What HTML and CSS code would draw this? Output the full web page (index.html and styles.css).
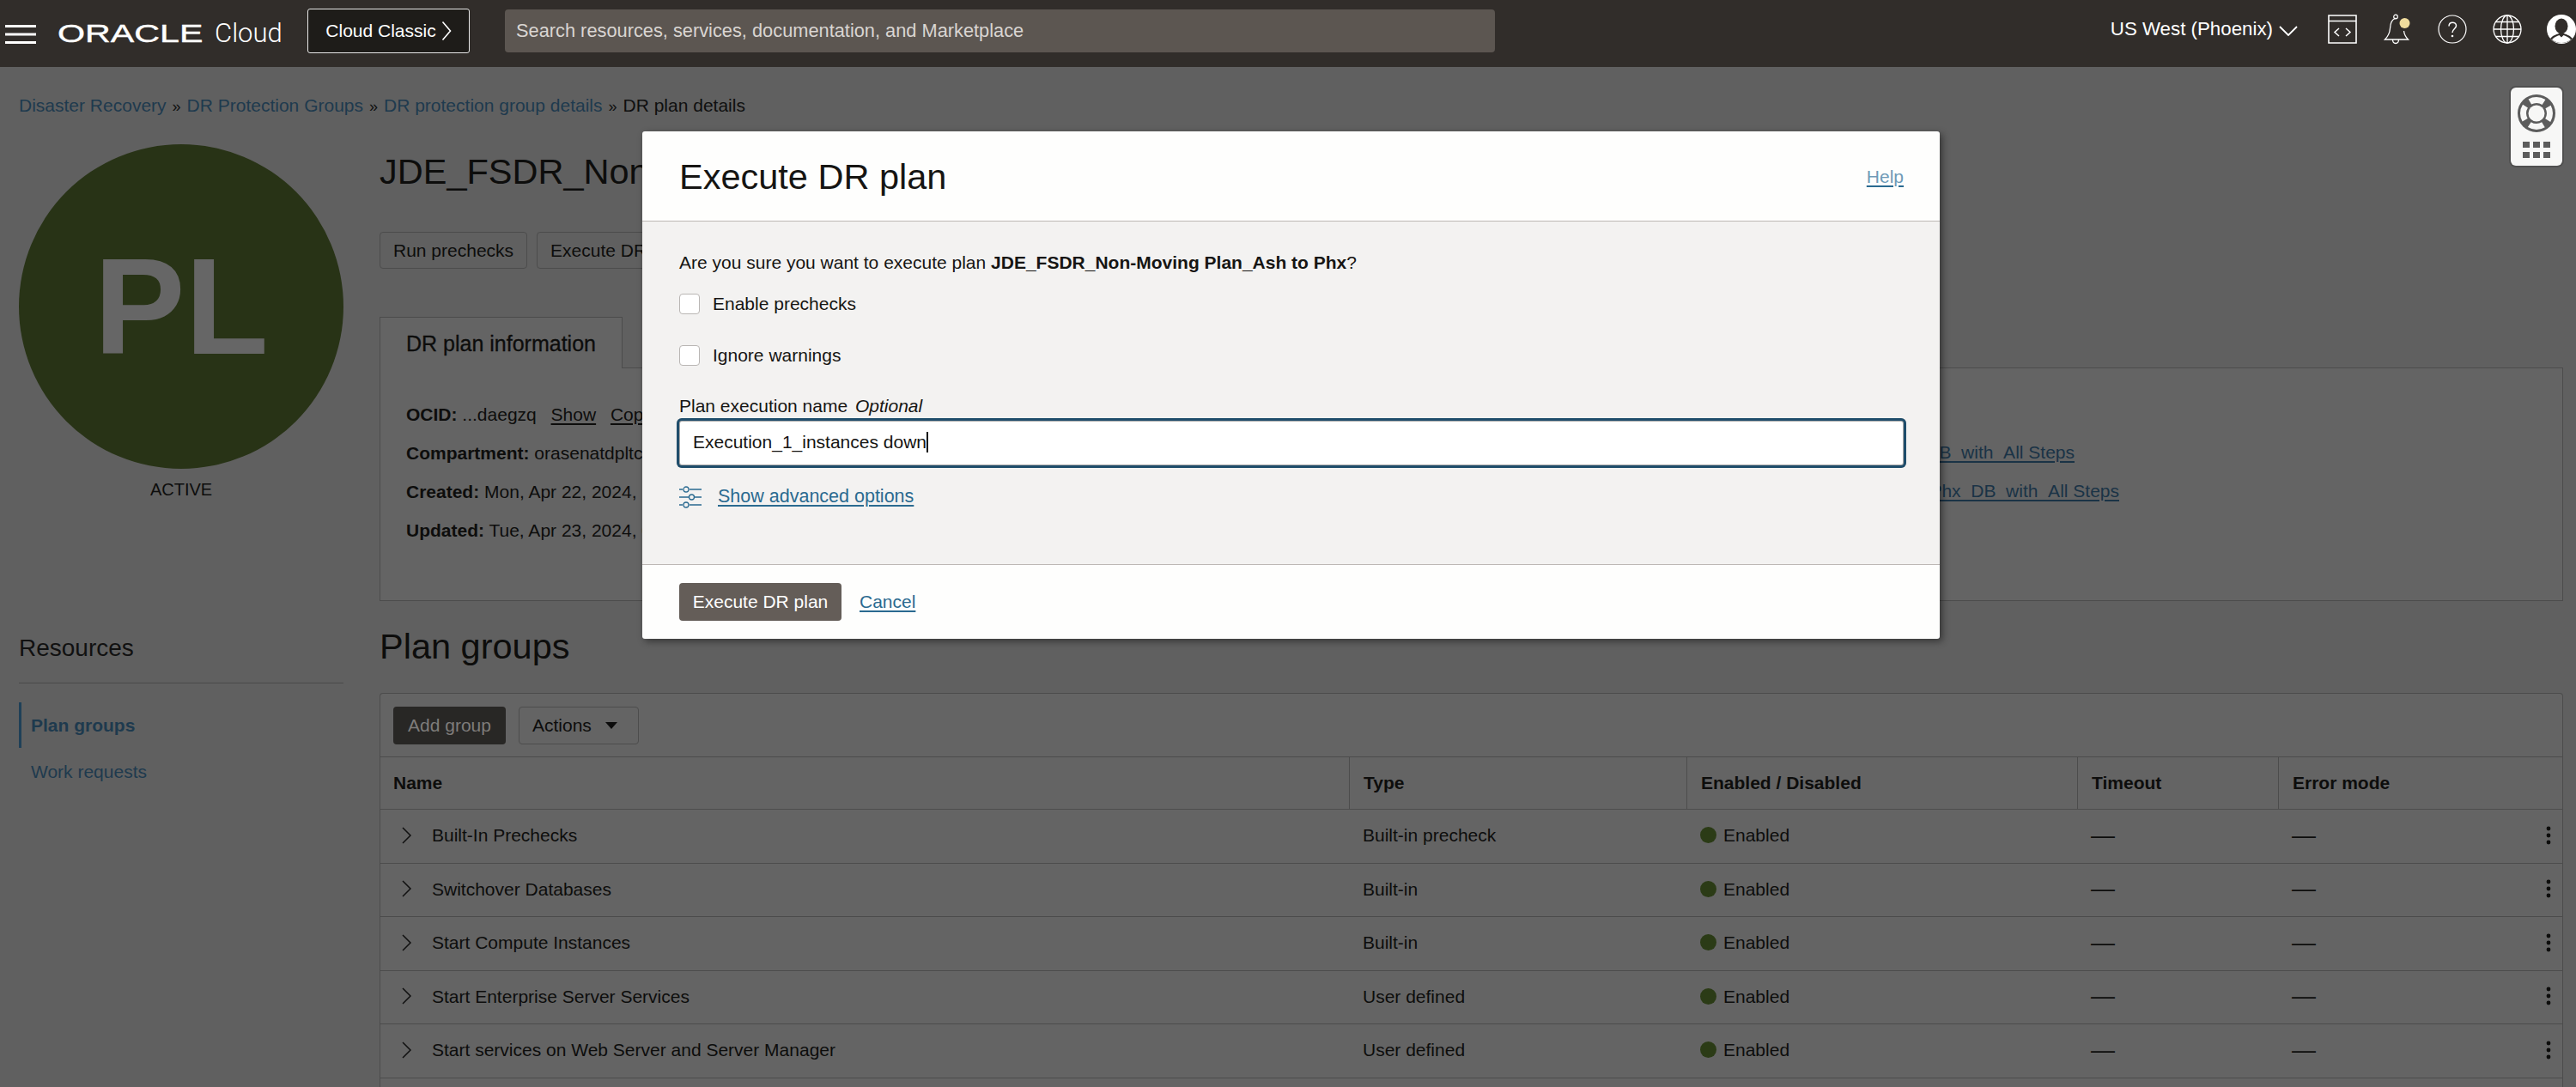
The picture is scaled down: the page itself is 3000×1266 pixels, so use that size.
FILE: index.html
```html
<!DOCTYPE html>
<html lang="en">
<head>
<meta charset="utf-8">
<title>Execute DR plan</title>
<link rel="stylesheet" href="styles.css">
</head>
<body>
<header class="topbar">
  <svg class="burger" viewBox="0 0 36 22" width="36" height="22"><path d="M0 1.5h36M0 11h36M0 20.5h36" stroke="#fff" stroke-width="3"/></svg>
  <div class="brand"><span class="oracle"><span class="oracle-inner">ORACLE</span></span><span class="cloud">Cloud</span></div>
  <button class="classic">Cloud Classic<svg viewBox="0 0 12 24" width="12" height="24"><path d="M1.5 1.5 10.5 12 1.5 22.5" fill="none" stroke="#fff" stroke-width="1.6"/></svg></button>
  <div class="search">Search resources, services, documentation, and Marketplace</div>
  <div class="top-right">
    <div class="region">US West (Phoenix)<svg viewBox="0 0 22 12" width="22" height="12"><path d="M1 1 11 11 21 1" fill="none" stroke="#fff" stroke-width="1.8"/></svg></div>
    <svg class="ic code" viewBox="0 0 34 34" width="34" height="34"><path d="M1 1h32v32H1zM1 7.5h32" fill="none" stroke="#fff" stroke-width="1.6"/><path d="M13 16l-5 4.5 5 4.5M21 16l5 4.5-5 4.5" fill="none" stroke="#fff" stroke-width="1.5"/></svg>
    <svg class="ic bell" viewBox="0 0 32 36" width="32" height="36"><path d="M14 5c-5 2-6 6-6.500 12-.4 5-2 9-6 13h27c-3-3-4.500-6-5-10" fill="none" stroke="#fff" stroke-width="1.300"/><circle cx="14" cy="3.500" r="2.300" fill="none" stroke="#fff" stroke-width="1.200"/><path d="M10.500 30c0 6 7 6 7 0" fill="none" stroke="#fff" stroke-width="1.300"/><circle cx="24.500" cy="11" r="6" fill="#f0dc9d"/></svg>
    <svg class="ic help" viewBox="0 0 34 34" width="34" height="34"><circle cx="17" cy="17" r="16" fill="none" stroke="#fff" stroke-width="1.200"/><path d="M13 13.500c0-6 8.500-5.500 8.500-.5 0 3.500-4.500 3.500-4.500 8" fill="none" stroke="#fff" stroke-width="1.500"/><circle cx="17" cy="25" r="1.300" fill="#fff"/></svg>
    <svg class="ic globe" viewBox="0 0 34 34" width="34" height="34"><g fill="none" stroke="#fff" stroke-width="1.300"><circle cx="17" cy="17" r="16"/><ellipse cx="17" cy="17" rx="7.500" ry="16"/><path d="M17 1v32M1 17h32M3.500 8.500h27M3.500 25.500h27"/></g></svg>
    <svg class="ic me" viewBox="0 0 34 34" width="34" height="34"><circle cx="17" cy="17" r="17" fill="#fff"/><ellipse cx="17" cy="13.500" rx="7.500" ry="9" fill="#312d2a"/><path d="M4 28c3-4 8-5 10-6h6c2 1 7 2 10 6-3 3-8 5-13 5S7 31 4 28z" fill="#312d2a"/><path d="M6 29c3-3 6-4 8.500-5l2.500 2.500 2.500-2.500c2.500 1 5.500 2 8.500 5-3 2.500-7 4-11 4s-8-1.500-11-4z" fill="#fff"/></svg>
  </div>
</header>

<main class="page">
  <nav class="crumbs"><a>Disaster Recovery</a><i>»</i><a>DR Protection Groups</a><i>»</i><a>DR protection group details</a><i>»</i><span>DR plan details</span></nav>
  <div class="layout">
    <aside class="side">
      <div class="badge">PL</div>
      <div class="state">ACTIVE</div>
      <h2 class="res">Resources</h2>
      <ul class="res-nav">
        <li class="on">Plan groups</li>
        <li>Work requests</li>
      </ul>
    </aside>
    <section class="content">
      <h1 class="title">JDE_FSDR_Non-Moving Plan_Ash to Phx</h1>
      <div class="actions">
        <button class="btn">Run prechecks</button>
        <button class="btn">Execute DR plan</button>
      </div>
      <div class="tab">DR plan information</div>
      <div class="details">
        <div class="d-row"><div><b>OCID:</b> ...daegzq <a class="l1">Show</a> <a class="l2">Copy</a></div></div>
        <div class="d-row"><div><b>Compartment:</b> orasenatdpltcomp01</div><a class="peer short">JDE_FSDR_DB_with_All Steps</a></div>
        <div class="d-row"><div><b>Created:</b> Mon, Apr 22, 2024, 18:10:32 UTC</div><a class="peer">JDE_FSDR_Ash_to_Phx_DB_with_All Steps</a></div>
        <div class="d-row"><div><b>Updated:</b> Tue, Apr 23, 2024, 02:41:07 UTC</div></div>
      </div>
      <h2 class="title pg">Plan groups</h2>
      <div class="grid-panel">
        <div class="toolbar">
          <button class="add">Add group</button>
          <button class="btn act">Actions<svg viewBox="0 0 14 8" width="14" height="8"><path d="M0 0h14L7 8z" fill="#0c0c0c"/></svg></button>
        </div>
        <div class="row head"><div>Name</div><div>Type</div><div>Enabled / Disabled</div><div>Timeout</div><div>Error mode</div></div>
        <div class="row"><div class="nm"><svg viewBox="0 0 12 20" width="12" height="20"><path d="M1 1l9 9-9 9" fill="none" stroke="#111" stroke-width="1.500"/></svg>Built-In Prechecks</div><div>Built-in precheck</div><div class="st"><i></i>Enabled</div><div class="dash">—</div><div class="last"><span class="dash">—</span><svg viewBox="0 0 6 22" width="6" height="22"><circle cx="3" cy="3" r="2.400"/><circle cx="3" cy="11" r="2.400"/><circle cx="3" cy="19" r="2.400"/></svg></div></div>
        <div class="row"><div class="nm"><svg viewBox="0 0 12 20" width="12" height="20"><path d="M1 1l9 9-9 9" fill="none" stroke="#111" stroke-width="1.500"/></svg>Switchover Databases</div><div>Built-in</div><div class="st"><i></i>Enabled</div><div class="dash">—</div><div class="last"><span class="dash">—</span><svg viewBox="0 0 6 22" width="6" height="22"><circle cx="3" cy="3" r="2.400"/><circle cx="3" cy="11" r="2.400"/><circle cx="3" cy="19" r="2.400"/></svg></div></div>
        <div class="row"><div class="nm"><svg viewBox="0 0 12 20" width="12" height="20"><path d="M1 1l9 9-9 9" fill="none" stroke="#111" stroke-width="1.500"/></svg>Start Compute Instances</div><div>Built-in</div><div class="st"><i></i>Enabled</div><div class="dash">—</div><div class="last"><span class="dash">—</span><svg viewBox="0 0 6 22" width="6" height="22"><circle cx="3" cy="3" r="2.400"/><circle cx="3" cy="11" r="2.400"/><circle cx="3" cy="19" r="2.400"/></svg></div></div>
        <div class="row"><div class="nm"><svg viewBox="0 0 12 20" width="12" height="20"><path d="M1 1l9 9-9 9" fill="none" stroke="#111" stroke-width="1.500"/></svg>Start Enterprise Server Services</div><div>User defined</div><div class="st"><i></i>Enabled</div><div class="dash">—</div><div class="last"><span class="dash">—</span><svg viewBox="0 0 6 22" width="6" height="22"><circle cx="3" cy="3" r="2.400"/><circle cx="3" cy="11" r="2.400"/><circle cx="3" cy="19" r="2.400"/></svg></div></div>
        <div class="row"><div class="nm"><svg viewBox="0 0 12 20" width="12" height="20"><path d="M1 1l9 9-9 9" fill="none" stroke="#111" stroke-width="1.500"/></svg>Start services on Web Server and Server Manager</div><div>User defined</div><div class="st"><i></i>Enabled</div><div class="dash">—</div><div class="last"><span class="dash">—</span><svg viewBox="0 0 6 22" width="6" height="22"><circle cx="3" cy="3" r="2.400"/><circle cx="3" cy="11" r="2.400"/><circle cx="3" cy="19" r="2.400"/></svg></div></div>
      </div>
    </section>
  </div>

  <div class="helper">
    <svg viewBox="0 0 44 44" width="44" height="44"><circle cx="22" cy="22" r="22" fill="#5c5c5c"/><circle cx="22" cy="22" r="15.500" fill="none" stroke="#f7f7f6" stroke-width="7" stroke-dasharray="17 7.350" stroke-dashoffset="8.500"/><circle cx="22" cy="22" r="9.500" fill="#f7f7f6"/></svg>
    <div class="dots"><i></i><i></i><i></i><i></i><i></i><i></i></div>
  </div>
</main>

<div class="dialog" role="dialog">
  <div class="dlg-head"><h2>Execute DR plan</h2><a class="help-link">Help</a></div>
  <div class="dlg-body">
    <p class="q">Are you sure you want to execute plan <b>JDE_FSDR_Non-Moving Plan_Ash to Phx</b>?</p>
    <label class="chk"><span class="box"></span>Enable prechecks</label>
    <label class="chk"><span class="box"></span>Ignore warnings</label>
    <div class="fld-label">Plan execution name <em>Optional</em></div>
    <div class="input"><span>Execution_1_instances down</span><span class="caret"></span></div>
    <div class="adv">
      <svg viewBox="0 0 26 26" width="26" height="26"><g fill="none" stroke="#2a6a90" stroke-width="1.300"><path d="M0 4h4M12 4h14M0 13h11M18 13h8M0 22h4M12 22h14"/><circle cx="8" cy="4" r="3"/><circle cx="14.500" cy="13" r="3"/><circle cx="8" cy="22" r="3"/></g></svg>
      <a>Show advanced options</a>
    </div>
  </div>
  <div class="dlg-foot"><button class="primary">Execute DR plan</button><a>Cancel</a></div>
</div>
</body>
</html>
```
FILE: styles.css
```css
* { box-sizing: border-box; }
html, body { margin: 0; height: 100%; }
body {
  position: relative;
  height: 1266px;
  overflow: hidden;
  background: #606060;
  color: #0d0d0c;
  font: 21px/1.3 "Liberation Sans", Arial, sans-serif;
}
a { text-decoration: none; }
button { font: inherit; cursor: default; }

/* top bar */
.topbar {
  height: 78px;
  background: #312d2a;
  color: #fff;
  display: flex;
  align-items: center;
  padding-left: 6px;
}
.burger { margin-top: 1px; flex: none; }
.brand { margin-left: 25px; display: flex; align-items: center; width: 291px; }
.oracle { width: 183px; display: block; height: 34px; line-height: 34px; font-size: 29px; }
.oracle-inner { display: inline-block; transform: scaleX(1.42); transform-origin: left center; -webkit-text-stroke: .4px #fff; }
.cloud { font: 300 31px/34px Roboto, "Liberation Sans", sans-serif; }
.classic {
  width: 189px; height: 52px; margin-top: -6px;
  background: #1e1c19; color: #fff;
  border: 1px solid #e8e8e8; border-radius: 3px;
  display: flex; align-items: center; justify-content: center; gap: 6px;
  font-size: 21px; padding: 0;
}
.search {
  margin: -6px 0 0 41px; width: 1153px; height: 50px;
  background: #5c5651; color: #d9d5d2; border-radius: 4px;
  line-height: 50px; padding-left: 13px; font-size: 21.800px;
}
.top-right { margin-left: auto; display: flex; align-items: center; height: 100%; margin-top: -10px; }
.region { display: flex; align-items: center; gap: 7px; font-size: 22.300px; }
.region svg { margin-top: 4px; }
.ic { flex: none; display: block; }
.code { margin-left: 35px; }
.bell { margin-left: 31px; }
.help { margin-left: 31px; }
.globe { margin-left: 30px; }
.me { margin-left: 29px; margin-right: 0; }

/* page */
.page { padding: 30px 15px 0 22px; }
.crumbs { height: 30px; line-height: 30px; margin-bottom: 30px; font-size: 21px; white-space: nowrap; }
.crumbs a { color: #1e3a4e; }
.crumbs i { font-style: normal; font-size: 18px; margin: 0 7px 0 7px; color: #111; }
.crumbs span { color: #0f0f0f; }
.layout { display: grid; grid-template-columns: 378px 1fr; column-gap: 42px; }

.badge {
  width: 378px; height: 378px; border-radius: 50%;
  background: #283316; color: #666;
  font-weight: 700; font-size: 159px; line-height: 378px; text-align: center;
}
.state { margin-top: 10px; height: 28px; line-height: 28px; text-align: center; font-size: 20px; }
.res {
  margin: 151px 0 0; height: 61px; line-height: 40px;
  font-size: 28px; font-weight: 400; color: #111;
  border-bottom: 1px solid #4a4a4a;
}
.res-nav { list-style: none; margin: 22px 0 0; padding: 0; color: #1e3a4e; }
.res-nav li { height: 53px; line-height: 53px; padding-left: 14px; margin-bottom: 1px; }
.res-nav .on { font-weight: 700; border-left: 3px solid #1f4058; padding-left: 11px; }

.title { margin: 7px 0 0; height: 50px; line-height: 50px; font-size: 41.500px; font-weight: 400; white-space: nowrap; }
.actions { margin-top: 45px; display: flex; gap: 11px; }
.btn {
  height: 43px; padding: 0 15px;
  background: transparent; color: #0d0d0c;
  border: 1px solid #4c4c4c; border-radius: 4px;
}
.tab {
  margin-top: 56px; width: 283px; height: 60px;
  padding: 10px 0 0 30px; line-height: 40px;
  font-size: 25px; font-weight: 400; -webkit-text-stroke: .3px #0d0d0c;
  background: #646464;
  border: 1px solid #4c4c4c; border-bottom: 0;
  position: relative; z-index: 1;
}
.details {
  margin-top: -1px; height: 272px;
  background: #646464; border: 1px solid #4c4c4c;
  padding: 31px 516px 0 30px;
}
.d-row { height: 45px; line-height: 45px; display: flex; justify-content: space-between; }
.d-row a { text-decoration: underline; text-underline-offset: 3px; color: #0d0d0c; }
.l1 { margin-left: 11px; }
.l2 { margin-left: 11px; }
.d-row .peer { color: #1a3346; position: relative; top: -1px; }
.d-row .short { margin-right: 52px; }
.pg { margin-top: 28px; }
.grid-panel {
  margin-top: 29px; background: #646464; min-height: 460px;
  border: 1px solid #4c4c4c; border-bottom: 0; border-radius: 4px 4px 0 0;
}
.toolbar { height: 74px; padding: 15px 15px 0; display: flex; gap: 15px; border-bottom: 1px solid #4c4c4c; }
.add { height: 44px; width: 131px; padding: 0; border: 0; border-radius: 4px; background: #282725; color: #7e7c7a; }
.act { height: 44px; width: 140px; display: flex; align-items: center; gap: 16px; }
.row {
  display: grid;
  grid-template-columns: 1128px 393px 455px 234px 1fr;
  height: 62.500px; align-items: center; padding-bottom: 2px;
  border-bottom: 1px solid #4c4c4c;
}
.row > div { padding-left: 16px; white-space: nowrap; }
.row > div.nm { display: flex; align-items: center; gap: 23px; padding-left: 25px; }
.head { height: 61px; padding-bottom: 0; font-weight: 700; align-items: stretch; }
.head > div { line-height: 60px; border-left: 1px solid #4c4c4c; height: 60px; }
.head > div:first-child { border-left: 0; padding-left: 15px; }
.st { display: flex; align-items: center; gap: 8px; }
.st i { width: 19px; height: 19px; border-radius: 50%; background: #2b3b16; }
.dash { font-size: 28px; line-height: 30px; }
.last { display: flex; justify-content: space-between; align-items: center; padding-right: 13px; }
.last svg { fill: #0d0d0c; }

.helper {
  position: absolute; right: 16px; top: 102px;
  width: 60px; height: 91px;
  background: #f7f7f6; border-radius: 6px;
  box-shadow: 0 0 0 2px #505050;
  display: flex; flex-direction: column; align-items: center; padding-top: 8px;
}
.dots { margin-top: 11px; display: grid; grid-template-columns: repeat(3, 8px); gap: 5px 4px; }
.dots i { height: 7px; background: #5c5c5c; }

/* dialog */
.dialog {
  position: absolute; left: 748px; top: 153px;
  width: 1511px; height: 591px;
  background: #fefefd; border-radius: 3px;
  box-shadow: 3px 3px 8px rgba(0,0,0,.45);
  display: flex; flex-direction: column;
  color: #161513;
}
.dlg-head {
  height: 105px; border-bottom: 1px solid #bdb8b5;
  display: flex; justify-content: space-between; align-items: center;
  padding: 2px 42px 0 43px;
}
.dlg-head h2 { margin: 0; font-size: 41.500px; font-weight: 400; line-height: 50px; }
.help-link { color: #6f9ab7; font-size: 21px; text-decoration: underline; text-decoration-color: #2a6a90; text-underline-offset: 3px; }
.dlg-body { flex: 1; background: #f3f2f1; padding: 33px 39px 0 43px; }
.q { margin: 0; height: 30px; line-height: 30px; }
.chk { display: flex; align-items: center; gap: 15px; height: 30px; margin-top: 18px; }
.chk + .chk { margin-top: 30px; }
.box { width: 24px; height: 24px; background: #fff; border: 1px solid #b9b6b4; border-radius: 4px; }
.fld-label { margin-top: 30px; height: 28px; line-height: 28px; }
.fld-label em { margin-left: 3px; }
.input {
  margin: 0 0 0 -3px; height: 58px;
  background: #fff; border-radius: 6px;
  display: flex; align-items: center; padding: 0 0 2px 19px;
  box-shadow: inset 0 0 0 3px #1f4d6b, inset 0 0 0 4px #aaa;
}
.caret { width: 2px; height: 24px; background: #111; }
.adv { margin-top: 19px; display: flex; align-items: center; gap: 19px; height: 30px; }
.adv svg { flex: none; }
.adv a { color: #2a6a90; font-size: 21.500px; text-decoration: underline; text-underline-offset: 3px; }
.dlg-foot {
  height: 87px; border-top: 1px solid #bdb8b5;
  display: flex; align-items: center; gap: 21px; padding: 0 0 0 43px;
}
.primary { height: 44px; width: 189px; padding: 0; border: 0; border-radius: 4px; background: #645d58; color: #fff; }
.dlg-foot a { color: #2a6a90; text-decoration: underline; text-underline-offset: 3px; }
```
